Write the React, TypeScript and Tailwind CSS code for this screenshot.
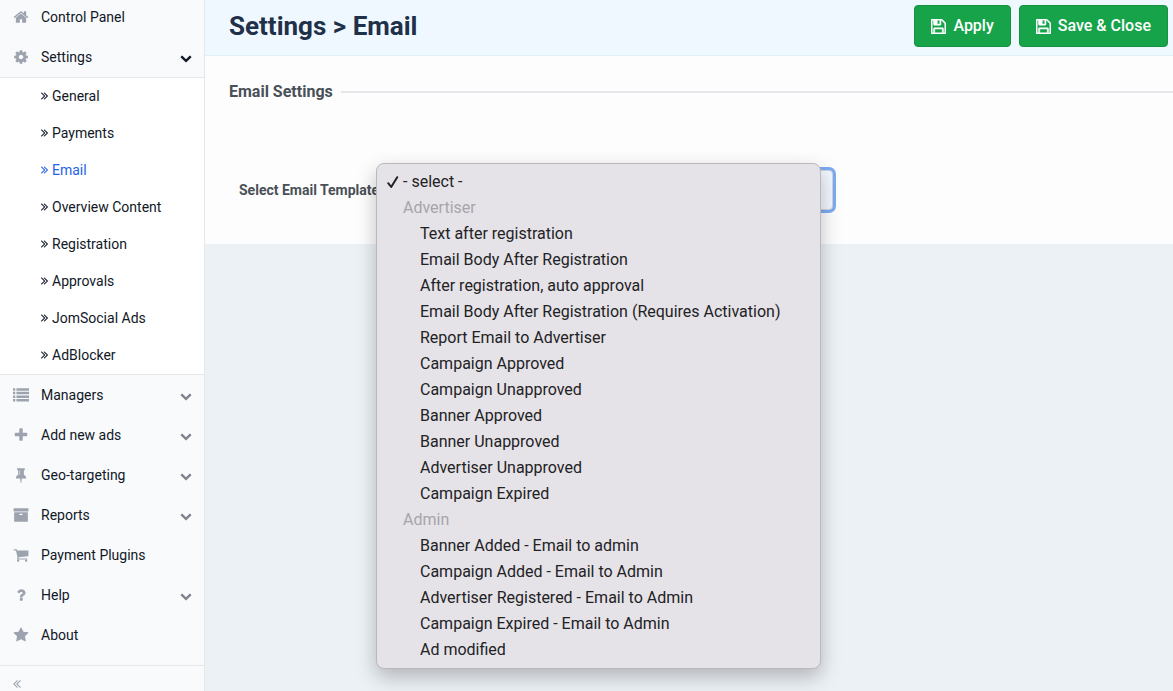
import { useState } from 'react';
import clsx from 'clsx';

// FontAwesome 4 outlines, 1792 unit grid
const PATHS = {
  home: 'M1472 992v480q0 26-19 45t-45 19h-384v-384h-256v384h-384q-26 0-45-19t-19-45v-480q0-1 .5-3t.5-3l575-474 575 474q1 2 1 6zm223-69l-62 74q-8 9-21 11h-3q-13 0-21-7l-692-577-692 577q-12 8-24 7-13-2-21-11l-62-74q-8-10-7-23.5t11-21.5l719-599q32-26 76-26t76 26l244 204v-195q0-14 9-23t23-9h192q14 0 23 9t9 23v408l219 182q10 8 11 21.5t-7 23.5z',
  cog: 'M1152 896q0-106-75-181t-181-75-181 75-75 181 75 181 181 75 181-75 75-181zm512-109v222q0 12-8 23t-20 13l-185 28q-19 54-39 91 35 50 107 138 10 12 10 25t-9 23q-27 37-99 108t-94 71q-12 0-26-9l-138-108q-44 23-91 38-16 136-29 186-7 28-36 28h-222q-14 0-24.5-8.5t-11.5-21.5l-28-184q-49-16-90-37l-141 107q-10 9-25 9-14 0-25-11-126-114-165-168-7-10-7-23 0-12 8-23 15-21 51-66.5t54-70.5q-27-50-41-99l-183-27q-13-2-21-12.5t-8-23.5v-222q0-12 8-23t19-13l186-28q14-46 39-92-40-57-107-138-10-12-10-24 0-10 9-23 26-36 98.5-107.5t94.5-71.5q13 0 26 10l138 107q44-23 91-38 16-136 29-186 7-28 36-28h222q14 0 24.5 8.5t11.5 21.5l28 184q49 16 90 37l142-107q9-9 24-9 13 0 25 10 129 119 165 170 7 8 7 22 0 12-8 23-15 21-51 66.5t-54 70.5q26 50 41 98l183 28q13 2 21 12.5t8 23.5z',
  list: 'M0 140h256v272h-256zM384 140h1408v272h-1408zM0 544h256v272h-256zM384 544h1408v272h-1408zM0 948h256v272h-256zM384 948h1408v272h-1408zM0 1352h256v272h-256zM384 1352h1408v272h-1408z',
  plus: 'M1600 736v192q0 40-28 68t-68 28h-416v416q0 40-28 68t-68 28h-192q-40 0-68-28t-28-68v-416h-416q-40 0-68-28t-28-68v-192q0-40 28-68t68-28h416v-416q0-40 28-68t68-28h192q40 0 68 28t28 68v416h416q40 0 68 28t28 68z',
  pin: 'M800 864v-448q0-14-9-23t-23-9-23 9-9 23v448q0 14 9 23t23 9 23-9 9-23zm672 352q0 26-19 45t-45 19h-429l-51 483q-2 12-10.5 20.5t-20.5 8.5h-1q-27 0-32-27l-76-485h-404q-26 0-45-19t-19-45q0-123 78.5-221.5t177.5-98.5v-512q-52 0-90-38t-38-90 38-90 90-38h640q52 0 90 38t38 90-38 90-90 38v512q99 0 177.5 98.5t78.5 221.5z',
  archive: 'M1088 832q0-26-19-45t-45-19h-256q-26 0-45 19t-19 45 19 45 45 19h256q26 0 45-19t19-45zm576-192v960q0 26-19 45t-45 19h-1408q-26 0-45-19t-19-45v-960q0-26 19-45t45-19h1408q26 0 45 19t19 45zm64-448v256q0 26-19 45t-45 19h-1536q-26 0-45-19t-19-45v-256q0-26 19-45t45-19h1536q26 0 45 19t19 45z',
  cart: 'M704 1536q0 52-38 90t-90 38-90-38-38-90 38-90 90-38 90 38 38 90zm896 0q0 52-38 90t-90 38-90-38-38-90 38-90 90-38 90 38 38 90zm128-1088v512q0 24-16.5 42.5t-40.5 21.5l-1044 122q13 60 13 70 0 16-24 64h920q26 0 45 19t19 45-19 45-45 19h-1024q-26 0-45-19t-19-45q0-11 8-31.5t16-36 21.5-40 15.5-29.5l-177-823h-204q-26 0-45-19t-19-45 19-45 45-19h256q16 0 28.5 6.5t19.5 15.5 13 24.5 8 26 5.5 29.5 4.5 26h1201q26 0 45 19t19 45z',
  question: 'M1088 1256v240q0 16-12 28t-28 12h-240q-16 0-28-12t-12-28v-240q0-16 12-28t28-12h240q16 0 28 12t12 28zm316-600q0 54-15.5 101t-35 76.5-55 59.5-57.5 43.5-61 35.5q-41 23-68.5 65t-27.5 67q0 17-12 32.5t-28 15.5h-240q-15 0-25.5-18.5t-10.5-37.5v-45q0-83 65-156.5t143-108.5q59-27 84-56t25-76q0-42-46.5-74t-107.5-32q-65 0-108 29-35 25-107 115-13 16-31 16-12 0-25-8l-164-125q-13-10-15.5-25t5.5-28q160-266 464-266 80 0 161 31t146 83 106 127.5 41 158.5z',
  star: 'M1728 647q0 22-26 48l-363 354 86 500q1 7 1 20 0 21-10.5 35.5t-30.5 14.5q-19 0-40-12l-449-236-449 236q-22 12-40 12-21 0-31.5-14.5t-10.5-35.5q0-6 2-20l86-500-364-354q-25-27-25-48 0-37 56-46l502-73 225-455q19-41 49-41t49 41l225 455 502 73q56 9 56 46z',
  chevron: 'M1683 808l-742 741q-19 19-45 19t-45-19l-742-741q-19-19-19-45.5t19-45.5l166-165q19-19 45-19t45 19l531 531 531-531q19-19 45-19t45 19l166 165q19 19 19 45.5t-19 45.5z',
  angles: 'M979 960q0 13-10 23l-466 466q-10 10-23 10t-23-10l-50-50q-10-10-10-23t10-23l393-393-393-393q-10-10-10-23t10-23l50-50q10-10 23-10t23 10l466 466q10 10 10 23zm384 0q0 13-10 23l-466 466q-10 10-23 10t-23-10l-50-50q-10-10-10-23t10-23l393-393-393-393q-10-10-10-23t10-23l50-50q10-10 23-10t23 10l466 466q10 10 10 23z',
  save: 'M512 1536h768v-384h-768v384zm896 0h128v-896q0-14-10-38.5t-20-34.5l-281-281q-10-10-34-20t-39-10v416q0 40-28 68t-68 28h-576q-40 0-68-28t-28-68v-416h-128v1280h128v-416q0-40 28-68t68-28h832q40 0 68 28t28 68v416zm-384-928v-320q0-13-9.5-22.5t-22.5-9.5h-192q-13 0-22.5 9.5t-9.5 22.5v320q0 13 9.5 22.5t22.5 9.5h192q13 0 22.5-9.5t9.5-22.5zm640 32v928q0 40-28 68t-68 28h-1344q-40 0-68-28t-28-68v-1344q0-40 28-68t68-28h928q40 0 88 20t76 48l280 280q28 28 48 76t20 88z',
};

type IconName = keyof typeof PATHS;

// glyphs that only fill part of the grid are cropped to their own box
const VIEW_BOXES: Partial<Record<IconName, string>> = {
  angles: '397 448 966 1024',
  save: '128 128 1536 1536',
};

function Icon({ name, className }: { name: IconName; className?: string }) {
  return (
    <svg
      viewBox={VIEW_BOXES[name] ?? '0 0 1792 1792'}
      className={clsx('shrink-0 fill-current', className)}
      aria-hidden="true"
    >
      <path d={PATHS[name]} />
    </svg>
  );
}

interface NavEntry {
  label: string;
  icon: IconName;
  expandable?: boolean;
  children?: string[];
}

const NAV: NavEntry[] = [
  { label: 'Control Panel', icon: 'home' },
  {
    label: 'Settings',
    icon: 'cog',
    expandable: true,
    children: [
      'General',
      'Payments',
      'Email',
      'Overview Content',
      'Registration',
      'Approvals',
      'JomSocial Ads',
      'AdBlocker',
    ],
  },
  { label: 'Managers', icon: 'list', expandable: true },
  { label: 'Add new ads', icon: 'plus', expandable: true },
  { label: 'Geo-targeting', icon: 'pin', expandable: true },
  { label: 'Reports', icon: 'archive', expandable: true },
  { label: 'Payment Plugins', icon: 'cart' },
  { label: 'Help', icon: 'question', expandable: true },
  { label: 'About', icon: 'star' },
];

const TEMPLATES = [
  {
    group: 'Advertiser',
    items: [
      'Text after registration',
      'Email Body After Registration',
      'After registration, auto approval',
      'Email Body After Registration (Requires Activation)',
      'Report Email to Advertiser',
      'Campaign Approved',
      'Campaign Unapproved',
      'Banner Approved',
      'Banner Unapproved',
      'Advertiser Unapproved',
      'Campaign Expired',
    ],
  },
  {
    group: 'Admin',
    items: [
      'Banner Added - Email to admin',
      'Campaign Added - Email to Admin',
      'Advertiser Registered - Email to Admin',
      'Campaign Expired - Email to Admin',
      'Ad modified',
    ],
  },
];

function NavRow({ item }: { item: NavEntry }) {
  return (
    <li>
      <a href="#" className="flex h-10 items-center pr-3 pl-[13px]">
        <Icon name={item.icon} className="size-4 text-[#9ca3af]" />
        <span className="ml-3 flex-1">{item.label}</span>
        {item.expandable && (
          <Icon
            name="chevron"
            className={clsx('mt-0.5 size-3', item.children ? 'text-[#111827]' : 'text-[#7d828c]')}
          />
        )}
      </a>
      {item.children && (
        <ul className="border-y border-gray-200 bg-white">
          {item.children.map((child) => (
            <li key={child}>
              <a
                href="#"
                className={clsx(
                  'flex h-[37px] items-center gap-1 pb-px pl-[41px]',
                  child === 'Email' && 'text-[#2563eb]',
                )}
              >
                <Icon name="angles" className="h-2 w-[7px]" />
                {child}
              </a>
            </li>
          ))}
        </ul>
      )}
    </li>
  );
}

function Sidebar() {
  return (
    <aside className="w-[205px] shrink-0 overflow-hidden border-r border-gray-200 bg-[#f9fafc] text-sm text-[#111827]">
      <nav className="-mt-[3px] pb-2.5">
        <ul>
          {NAV.map((item) => (
            <NavRow key={item.label} item={item} />
          ))}
        </ul>
      </nav>
      <button type="button" aria-label="Collapse menu" className="flex w-full border-t border-gray-200 px-[13px] py-3.5">
        <Icon name="angles" className="size-2 rotate-180 text-[#9ca3af]" />
      </button>
    </aside>
  );
}

function ToolbarButton({ label }: { label: string }) {
  return (
    <button
      type="button"
      className="flex h-[42px] items-center gap-[7px] rounded border border-[#15933f] bg-[#16a34a] px-4 font-medium text-white"
    >
      <Icon name="save" className="size-[15px] stroke-current stroke-[50px]" />
      {label}
    </button>
  );
}

function TemplateMenu({ value, onPick }: { value: string; onPick: (v: string) => void }) {
  const row = (label: string, indent: string) => (
    <li
      key={label}
      role="option"
      aria-selected={label === value}
      className={clsx('flex h-[26px] cursor-default items-center', indent)}
      onClick={() => onPick(label)}
    >
      {label === value && (
        <svg viewBox="0 0 12 14" className="mr-1 h-3.5 w-3" fill="none" stroke="currentColor" aria-hidden="true">
          <path d="M1.2 8.2 4.2 12 10.2 2.2" strokeWidth="2" strokeLinecap="round" strokeLinejoin="round" />
        </svg>
      )}
      {label}
    </li>
  );

  return (
    <ul
      role="listbox"
      aria-label="Email templates"
      className="absolute -top-[7px] -left-[3px] z-10 w-[445px] rounded-lg border border-[#b9b8be] bg-[#e5e2e8] py-[5px] text-base text-[#222224] shadow-[0_8px_20px_rgba(0,0,0,0.25)]"
    >
      {row('- select -', value === '- select -' ? 'pl-[10px]' : 'pl-[26px]')}
      {TEMPLATES.map(({ group, items }) => (
        <li key={group} role="group" aria-label={group}>
          <div className="flex h-[26px] items-center pl-[26px] text-[#a7a5aa]">{group}</div>
          <ul>{items.map((item) => row(item, item === value ? 'pl-[27px]' : 'pl-[43px]'))}</ul>
        </li>
      ))}
    </ul>
  );
}

export default function App() {
  const [template, setTemplate] = useState('- select -');

  return (
    <div className="flex h-screen overflow-hidden bg-[#ecf1f5] font-['Roboto',sans-serif]">
      <Sidebar />
      <main className="min-w-0 flex-1">
        <header className="flex h-14 items-start justify-between border-b border-[#e0f2f7] bg-[#f0f8ff] pt-[5px] pr-[5px] pl-6">
          <h1 className="text-[26px] leading-[42px] font-bold text-[#1f3049]">Settings &gt; Email</h1>
          <div className="flex gap-2">
            <ToolbarButton label="Apply" />
            <ToolbarButton label="Save &amp; Close" />
          </div>
        </header>

        <section className="bg-[#fdfdfd] pt-6 pb-[34px]">
          <h2 className="flex items-center gap-2 pl-6 text-base font-bold text-[#495057]">
            Email Settings
            <span className="h-0.5 flex-1 bg-gray-200" />
          </h2>
          <div className="mt-[66px] flex items-center pl-[34px]">
            <label htmlFor="template" className="w-[140px] shrink-0 text-sm font-bold whitespace-nowrap text-[#495057]">
              Select Email Template
            </label>
            <div className="relative">
              <select
                id="template"
                value={template}
                onChange={(e) => setTemplate(e.target.value)}
                className="block h-10 w-[454px] appearance-none rounded border border-gray-300 bg-[#f3f7ff] px-3 ring-3 ring-[#7dacf2] outline-none"
              >
                <option>- select -</option>
                {TEMPLATES.map(({ group, items }) => (
                  <optgroup key={group} label={group}>
                    {items.map((item) => (
                      <option key={item}>{item}</option>
                    ))}
                  </optgroup>
                ))}
              </select>
              <TemplateMenu value={template} onPick={setTemplate} />
            </div>
          </div>
        </section>
      </main>
    </div>
  );
}
